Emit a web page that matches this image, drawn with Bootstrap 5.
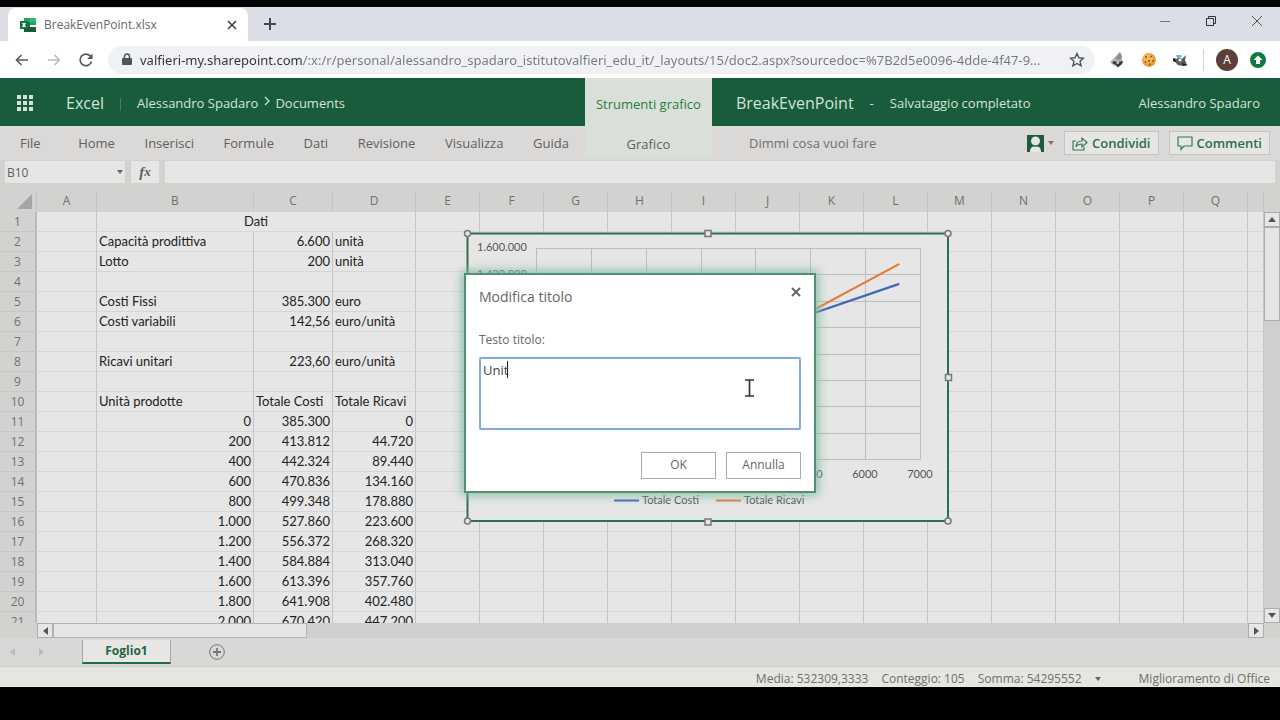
<!DOCTYPE html>
<html lang="it">
<head>
<meta charset="utf-8">
<meta name="viewport" content="width=device-width, initial-scale=1">
<title>BreakEvenPoint.xlsx</title>
<link href="https://cdn.jsdelivr.net/npm/bootstrap@5.3.0/dist/css/bootstrap.min.css" rel="stylesheet">
<style>
  :root { --xl-green: #185c3c; --ui: "Open Sans", "Noto Sans", sans-serif; --cell: Lato, "Open Sans", sans-serif; }
  body { font-family: var(--ui); font-size: 13px; line-height: 20px; background: #000; color: #444; }
  svg { display: block; flex: none; }
  button, input, textarea { font-family: inherit; }
  .bare { background: none; border: 0; padding: 0; color: inherit; display: flex; align-items: center; justify-content: center; }
  .window { height: 100vh; padding: 7px 0 33px; }

  /* browser */
  .tabstrip { height: 34px; background: #dcdee5; padding-left: 8px; }
  .browser-tab { width: 240px; background: #fff; border-radius: 8px 8px 0 0; margin-top: 1px; padding: 0 10px 0 12px; color: #66696d; font-size: 12px; }
  .win-buttons { gap: 34px; padding: 0 17px 6px 0; }
  .toolbar { height: 37px; background: #fff; color: #505357; padding: 0 14px; }
  .omnibox { height: 28px; border-radius: 14px; background: #f0f1f4; padding: 0 10px 0 14px; margin-left: 14px; min-width: 0; }
  .omnibox input { border: 0; padding: 0; outline: 0; font-family: "Noto Sans", sans-serif; font-size: 13px; height: 24px; min-width: 0; text-overflow: ellipsis;
    background: linear-gradient(90deg, #303336 162px, #76797d 162px); -webkit-background-clip: text; background-clip: text; color: transparent; }
  .extensions { gap: 16px; margin-left: 14px; }
  .profile { gap: 12px; margin-left: 14px; }
  .avatar { width: 22px; height: 22px; border-radius: 50%; background: #5c4038; color: #fff; font-size: 12px; }

  /* application */
  .app-area { background: #d2d2cf; }
  .three { display: grid; grid-template-columns: 45.7% 127px 1fr; flex: none; }
  .title-row { height: 48px; background: var(--xl-green); color: #d3e3da; font-size: 13px; }
  .title-row a { color: inherit; text-decoration: none; }
  .brand { font-size: 16px; }
  .tool-tab { background: #d9e0d9; color: #2d7d3a; padding-top: 3px; }
  .ribbon { height: 34px; background: #dad9d7; color: #606060; }
  .ribbon .nav-link { color: inherit; padding: 0; }
  .ribbon .chart-tab { background: #d9e0d9; height: 31px; padding-top: 4px; color: inherit; }
  .ribbon-right { padding: 0 10px 0 37px; }
  .out-btn { height: 24px; background: #e5e5e4; border: 1px solid #c3c3c1; color: #2c6e4f; font-weight: 600; padding: 0 7px; gap: 4px; }
  .out-group { gap: 10px; }
  .tell { background: none; border: 0; color: #666; padding: 0; width: 190px; outline: 0; }
  .tell::placeholder { color: #707070; opacity: 1; }

  .formula-row { height: 30px; padding: 1px 5px 7px; gap: 6px; flex: none; }
  .formula-row input, .fx { background: #e6e6e6; border: 0; color: #606060; outline: 0; }
  .name-box { width: 120px; position: relative; }
  .name-box input { width: 100%; height: 22px; padding: 0 2px; font-size: 12px; }
  .name-box button { position: absolute; right: 2px; top: 9px; }
  .fx { width: 28px; font: italic bold 15px "Liberation Serif", serif; }

  .grid-row { flex: 1 1 0; min-height: 0; }
  .grid-wrap { position: relative; background: #e6e6e6; }
  .sheet { table-layout: fixed; width: 100%; border-collapse: separate; border-spacing: 0; font-family: var(--cell); font-size: 13px; color: #222; }
  .sheet th { background: #d2d2d0; color: #707070; font-weight: 400; font-family: var(--ui); font-size: 12px; text-align: center; padding: 0; }
  .sheet thead th { height: 22px; line-height: 22px; border-right: 1px solid #c6c6c6; }
  .sheet tbody th { height: 20px; line-height: 19px; border-right: 2px solid #bbb; border-bottom: 1px solid #c8c8c6; }
  .sheet td { height: 20px; line-height: 19px; padding: 0 2px; border-right: 1px solid #c4c4c7; border-bottom: 1px solid #d6d6d8; white-space: nowrap; overflow: hidden; }
  .c-head { width: 37px; } .c-a { width: 60px; } .c-b { width: 157px; } .c-c { width: 79px; } .c-d { width: 83px; } .c-n { width: 64px; }
  .chart { position: absolute; left: 463px; top: 38px; }
  .chart text { font-family: var(--cell); font-size: 11px; fill: #555; }

  .v-bar { width: 16px; background: #cfcfcf; margin-top: 22px; }
  .h-bar { height: 15px; background: #cfcfcf; margin: 0 16px 0 37px; }
  .sb { background: #e6e6e6; border: 1px solid #adadad; width: 16px; height: 15px; flex: none; color: #555; padding: 0; display: flex; align-items: center; justify-content: center; }
  .v-thumb { height: 94px; background: #e6e6e8; border: 1px solid #adadb0; }
  .h-thumb { width: 254px; background: #e6e6e6; border: 1px solid #b4b4b4; }
  .sheet-tabs { height: 29px; background: #d9d8d6; padding-left: 10px; border-bottom: 1px solid #cdcdcb; }
  .sheet-tab { width: 89px; height: 24px; background: #e6e6e4; border: solid #a5a5a5; border-width: 0 1px 2px; border-bottom-color: #1f6e46; color: #22653f; font-weight: 700; font-size: 12px; padding: 0; margin-left: 38px; }
  .add-sheet { margin-left: 38px; }
  .status { height: 20px; background: #e5e6e1; color: #707070; font-size: 12px; padding: 3px 10px 0 0; gap: 13px; }
  .status a { color: inherit; text-decoration: none; margin-left: 25px; }

  .overlay { position: absolute; inset: 0; }
  .dialog-box { width: 352px; background: #fff; border: 2px solid #4f9272; box-shadow: 0 0 10px 2px #83bda0; padding: 12px 13px; color: #666; }
  .dialog-box h2 { font-size: 14px; line-height: 20px; font-weight: 400; margin: 0; }
  .dialog-box label { font-size: 12px; margin-top: 23px; margin-bottom: 7px; }
  .title-field { position: relative; }
  .title-field textarea { display: block; width: 100%; height: 73px; resize: none; border: 2px solid #80abe0; border-radius: 2px; outline: 0; padding: 1px 2px; font-size: 13px; line-height: 20px; color: #444; }
  .caret { position: absolute; left: 28px; top: 4px; width: 1px; height: 17px; background: #222; }
  .pointer { position: absolute; left: 265px; top: 22px; }
  .dlg-actions { gap: 10px; margin-top: 22px; }
  .dlg-btn { width: 75px; height: 27px; background: #fff; border: 1px solid #ababab; color: #666; font-size: 12px; padding: 0; }
</style>
</head>
<body>
<div class="window d-flex flex-column">
  <header class="flex-shrink-0">
    <div class="tabstrip d-flex">
      <div class="browser-tab d-flex align-items-center">
        <svg width="16" height="14" viewBox="0 0 16 14"><path fill="#21a366" d="M4 0h12v7H4z"/><path fill="#107c41" d="M4 4h6v6H4z"/><path fill="#2fb878" d="M10 0h6v4h-6z"/><path fill="#185c37" d="M4 9h12v5H4z"/><path fill="#0d7040" d="M0 3h8v8H0z"/><path stroke="#fff" stroke-width="1.3" d="M2.5 5l3 4M5.500 5l-3 4"/></svg>
        <span class="ms-2 flex-grow-1">BreakEvenPoint.xlsx</span>
        <button class="bare" aria-label="Chiudi scheda"><svg width="12" height="12" viewBox="0 0 12 12" stroke="#444" stroke-width="1.700"><path d="M2 2l8 8M10 2l-8 8"/></svg></button>
      </div>
      <button class="bare ms-3" aria-label="Nuova scheda"><svg width="12" height="12" viewBox="0 0 12 12" stroke="#44474b" stroke-width="2"><path d="M6 0v12M0 6h12"/></svg></button>
      <div class="ms-auto d-flex win-buttons">
        <button class="bare" aria-label="Riduci a icona"><svg width="12" height="12" stroke="#777"><path d="M1 6.500h10"/></svg></button>
        <button class="bare" aria-label="Ripristina"><svg width="12" height="12" fill="none" stroke="#333"><path d="M1.500 3.500h7v7h-7zM3.500 3.500v-2h7v7h-2"/></svg></button>
        <button class="bare" aria-label="Chiudi"><svg width="12" height="12" stroke="#555"><path d="M1 1l10 10M11 1L1 11"/></svg></button>
      </div>
    </div>
    <div class="toolbar d-flex align-items-center">
      <button class="bare" aria-label="Indietro"><svg width="16" height="16" viewBox="0 0 16 16" fill="none" stroke="#55585c" stroke-width="1.600"><path d="M14 8H2.500M7.500 3L2.500 8l5 5"/></svg></button>
      <button class="bare ms-3" aria-label="Avanti"><svg width="16" height="16" viewBox="0 0 16 16" fill="none" stroke="#bbb" stroke-width="1.600"><path d="M2 8h11.500M8.500 3l5 5-5 5"/></svg></button>
      <button class="bare ms-3" aria-label="Ricarica"><svg width="16" height="16" viewBox="0 0 16 16" fill="none" stroke="#55585c" stroke-width="1.700"><path d="M13.500 9.500a5.800 5.800 0 1 1-1.200-5.500L14 5.500"/><path fill="#55585c" stroke="none" d="M14.500 1.500v5.500H9z"/></svg></button>
      <div class="omnibox d-flex align-items-center flex-grow-1">
        <svg width="10" height="13" viewBox="0 0 10 13"><path fill="none" stroke="#505357" stroke-width="1.500" d="M2.500 6V3.500a2.500 2.500 0 0 1 5 0V6"/><rect y="5" width="10" height="7" rx="1" fill="#505357"/></svg>
        <input class="flex-grow-1 mx-2" aria-label="Indirizzo" value="valfieri-my.sharepoint.com/:x:/r/personal/alessandro_spadaro_istitutovalfieri_edu_it/_layouts/15/doc2.aspx?sourcedoc=%7B2d5e0096-4dde-4f47-9...">
        <button class="bare" aria-label="Aggiungi ai preferiti"><svg width="16" height="16" viewBox="0 0 16 16" fill="none" stroke="#505357" stroke-width="1.400"><path d="M8 1.500l1.900 4.300 4.600.4-3.500 3.100 1.100 4.600L8 11.500l-4.100 2.400L5 9.300 1.500 6.200l4.600-.4z"/></svg></button>
      </div>
      <div class="d-flex align-items-center extensions">
        <svg width="16" height="18" viewBox="0 0 16 18"><path fill="#b4b7ba" d="M11 1c1.500 3 2.500 5 2 8l1 2-5 5-5-2-3-3 2-2 4-4z"/><path fill="#8b8f92" d="M11 1L6 8l5 1 2-3z"/><path fill="#3a3a3a" d="M5 10l4 1 5-1-1 3-4 3.500L7 14l-4-2z"/><path fill="#e4e4e4" d="M7 11.500l3-.5v1.500l-2 .5z"/></svg>
        <svg width="16" height="16" viewBox="0 0 16 16"><circle cx="8" cy="8" r="7" fill="#e9a23b"/><circle cx="7" cy="6.500" r="5" fill="#f3b854"/><g fill="#8a5420"><circle cx="5" cy="5" r="1"/><circle cx="10" cy="4.500" r=".9"/><circle cx="8" cy="9" r="1.100"/><circle cx="12" cy="9" r=".9"/><circle cx="4.500" cy="10" r=".9"/><circle cx="9" cy="12.500" r=".9"/></g></svg>
        <svg width="16" height="16" viewBox="0 0 16 16"><path fill="#5a5a5a" d="M1 6l3 1 1-2 4 2 4-4-1 5 2 5-4 1-5-1-4-4z"/><path fill="#68b9d6" d="M3 3h5l1 2-5 1z"/><path fill="#222" d="M0 6l3 2-1 2-2-1zM9 11l6 2-5 1z"/><circle cx="7" cy="8" r="1.600" fill="#eee"/></svg>
      </div>
      <div class="d-flex align-items-center profile">
        <span class="vr"></span>
        <button class="bare avatar" aria-label="Profilo">A</button>
        <button class="bare" aria-label="Aggiorna"><svg width="16" height="16" viewBox="0 0 16 16"><circle cx="8" cy="8" r="8" fill="#0c7c3f"/><path fill="#fff" d="M8 3.500l4.500 4.500H10v4H6V8H3.500z"/></svg></button>
      </div>
    </div>
  </header>

  <main class="app-area position-relative flex-grow-1 d-flex flex-column overflow-hidden">
    <div class="title-row three">
      <div class="d-flex align-items-center ps-3 pt-1">
        <button class="bare pb-1" aria-label="Avvio app"><svg width="18" height="18" viewBox="0 0 18 18" fill="#d3e3da"><path d="M1 1h4v4H1zM7 1h4v4H7zM13 1h4v4h-4zM1 7h4v4H1zM7 7h4v4H7zM13 7h4v4h-4zM1 13h4v4H1zM7 13h4v4H7zM13 13h4v4h-4z"/></svg></button>
        <a href="#" class="brand ms-4 ps-2 pb-1">Excel</a>
        <span class="vr mx-3 my-3"></span>
        <a href="#" class="pb-1">Alessandro Spadaro</a>
        <svg class="mx-1 mb-2" width="9" height="10" viewBox="0 0 9 10" fill="none" stroke="#cfe0d6" stroke-width="1.300"><path d="M3 1l4 4-4 4"/></svg>
        <a href="#" class="pb-1">Documents</a>
      </div>
      <div class="tool-tab d-flex align-items-center justify-content-center">Strumenti grafico</div>
      <div class="d-flex align-items-center ps-4 pe-3">
        <span class="brand">BreakEvenPoint</span><span class="mx-3">-</span><span>Salvataggio completato</span>
        <a href="#" class="ms-auto me-1">Alessandro Spadaro</a>
      </div>
    </div>
    <div class="ribbon three">
      <nav class="nav align-items-center justify-content-between flex-nowrap px-3">
        <a class="nav-link ms-1 me-2" href="#">File</a><a class="nav-link" href="#">Home</a><a class="nav-link" href="#">Inserisci</a><a class="nav-link" href="#">Formule</a><a class="nav-link" href="#">Dati</a><a class="nav-link" href="#">Revisione</a><a class="nav-link" href="#">Visualizza</a><a class="nav-link" href="#">Guida</a>
      </nav>
      <a class="chart-tab d-flex align-items-center justify-content-center text-decoration-none" href="#">Grafico</a>
      <div class="d-flex align-items-center out-group ribbon-right">
        <input class="tell" aria-label="Dimmi cosa vuoi fare" placeholder="Dimmi cosa vuoi fare">
        <button class="bare ms-auto gap-1" aria-label="Utenti"><svg width="17" height="17" viewBox="0 0 17 17"><path fill="#1d5a3e" d="M0 0h17v17H0z"/><circle cx="8.500" cy="6" r="4.500" fill="#e4e6e4"/><path fill="#e4e6e4" d="M3 17c0-4 2-6 5.500-6s5.500 2 5.500 6z"/><path stroke="#1d5a3e" stroke-width="1.200" d="M5 10q3.500 2.500 7 0" fill="none"/></svg><svg width="6" height="4"><path d="M0 0h6L3 4z" fill="#777"/></svg></button>
        <button class="out-btn d-flex align-items-center"><svg width="16" height="15" viewBox="0 0 16 15" fill="none" stroke="#39775a" stroke-width="1.200"><path d="M4 5H1v9h11v-3M4 11c0-4 2-6 6-6V2l5 4.500L10 11V8c-3 0-5 1-6 3z"/></svg>Condividi</button>
        <button class="out-btn d-flex align-items-center"><svg width="16" height="15" viewBox="0 0 16 15" fill="none" stroke="#39775a" stroke-width="1.200"><path d="M1 1h14v9H7l-3 3.500V10H1z"/></svg>Commenti</button>
      </div>
    </div>
    <div class="formula-row d-flex">
      <div class="name-box"><input aria-label="Casella nome" value="B10"><button class="bare" aria-label="Apri elenco nomi"><svg width="6" height="4"><path d="M0 0h6L3 4z" fill="#666"/></svg></button></div>
      <button class="fx bare" aria-label="Inserisci funzione">f<small>x</small></button>
      <input class="flex-grow-1" aria-label="Barra della formula">
    </div>

    <div class="d-flex grid-row">
      <div class="grid-wrap flex-grow-1 overflow-hidden">
        <table class="sheet">
          <colgroup id="cols"></colgroup>
          <thead><tr id="letters"></tr></thead>
          <tbody id="rows"></tbody>
        </table>
        <svg class="chart" width="490" height="300" viewBox="463 228 490 300">
          <rect x="467.500" y="233.500" width="480.500" height="287.500" fill="#e6e6e6" stroke="#316f51" stroke-width="2"/>
          <path id="plot-lines" fill="none" stroke="#bdbdbd"/>
          <path d="M536 408.200L898.500 284.100" stroke="#4168b8" stroke-width="2.200" stroke-linecap="round"/>
          <path d="M536 459L898.500 264.400" stroke="#e07b39" stroke-width="2.200" stroke-linecap="round"/>
          <text x="477" y="251">1.600.000</text><text x="477" y="278">1.400.000</text>
          <text x="810" y="478" text-anchor="middle">5000</text><text x="865" y="478" text-anchor="middle">6000</text><text x="920" y="478" text-anchor="middle">7000</text>
          <path d="M614 500.500h25" stroke="#4168b8" stroke-width="2"/><text x="642" y="504">Totale Costi</text>
          <path d="M716 500.500h25" stroke="#e07b39" stroke-width="2"/><text x="744" y="504">Totale Ricavi</text>
          <g fill="#e6e6e6" stroke="#777" stroke-width="1.500"><circle cx="467.500" cy="233.500" r="3"/><circle cx="948" cy="233.500" r="3"/><circle cx="467.500" cy="521" r="3"/><circle cx="948" cy="521" r="3"/><path d="M705 230.500h6v6h-6zM705 519h6v6h-6zM945.500 374.500h6v6h-6z"/></g>
        </svg>
      </div>
      <div class="v-bar d-flex flex-column flex-shrink-0">
        <button class="sb" aria-label="Scorri su"><svg width="8" height="5"><path d="M0 5h8L4 0z" fill="#555"/></svg></button>
        <div class="v-thumb"></div>
        <button class="sb mt-auto" aria-label="Scorri giù"><svg width="8" height="5"><path d="M0 0h8L4 5z" fill="#555"/></svg></button>
      </div>
    </div>
    <div class="h-bar d-flex flex-shrink-0">
      <button class="sb" aria-label="Scorri a sinistra"><svg width="5" height="8"><path d="M5 0v8L0 4z" fill="#555"/></svg></button>
      <div class="h-thumb"></div>
      <button class="sb ms-auto" aria-label="Scorri a destra"><svg width="5" height="8"><path d="M0 0v8l5-4z" fill="#555"/></svg></button>
    </div>
    <div class="sheet-tabs d-flex align-items-center flex-shrink-0">
      <button class="bare" aria-label="Foglio precedente"><svg width="5" height="8"><path d="M5 0v8L0 4z" fill="#bbb"/></svg></button>
      <button class="bare ms-4" aria-label="Foglio successivo"><svg width="5" height="8"><path d="M0 0v8l5-4z" fill="#bbb"/></svg></button>
      <button class="sheet-tab">Foglio1</button>
      <button class="bare add-sheet" aria-label="Nuovo foglio"><svg width="16" height="16" viewBox="0 0 16 16" fill="none" stroke="#777"><circle cx="8" cy="8" r="7.300"/><path stroke-width="1.800" d="M8 4v8M4 8h8"/></svg></button>
    </div>
    <footer class="status d-flex align-items-center flex-shrink-0 justify-content-end">
      <span>Media: 532309,3333</span><span>Conteggio: 105</span><span>Somma: 54295552</span>
      <button class="bare" aria-label="Opzioni barra di stato"><svg width="6" height="4"><path d="M0 0h6L3 4z" fill="#666"/></svg></button>
      <a href="#">Miglioramento di Office</a>
    </footer>

    <div class="overlay d-flex align-items-center justify-content-center">
      <form class="dialog-box" role="dialog" aria-labelledby="dlg-title">
        <div class="d-flex justify-content-between align-items-start">
          <h2 id="dlg-title">Modifica titolo</h2>
          <button type="button" class="bare" aria-label="Chiudi"><svg width="10" height="10" stroke="#666" stroke-width="2"><path d="M1 1l8 8M9 1L1 9"/></svg></button>
        </div>
        <label for="title-text" class="d-block">Testo titolo:</label>
        <div class="title-field">
          <textarea id="title-text">Unit</textarea>
          <span class="caret"></span>
          <svg class="pointer" width="11" height="18" viewBox="0 0 11 18" fill="none" stroke="#333" stroke-width="1.700"><path d="M1 1h9M1 17h9M5.500 1v16"/></svg>
        </div>
        <div class="d-flex justify-content-end dlg-actions">
          <button type="button" class="dlg-btn">OK</button><button type="button" class="dlg-btn">Annulla</button>
        </div>
      </form>
    </div>
  </main>
</div>
<script src="https://cdn.jsdelivr.net/npm/bootstrap@5.3.0/dist/js/bootstrap.bundle.min.js"></script>
<script>
  const letters = 'ABCDEFGHIJKLMNOPQ'.split('');
  const widthClass = l => ({ A: 'c-a', B: 'c-b', C: 'c-c', D: 'c-d' }[l] || 'c-n');
  document.getElementById('cols').innerHTML = '<col class="c-head">' + letters.map(l => `<col class="${widthClass(l)}">`).join('') + '<col>';
  document.getElementById('letters').innerHTML =
    '<th><svg class="ms-auto me-1" width="15" height="15"><path d="M15 0v15H0z" fill="#a5a5a3"/></svg></th>' +
    letters.map(l => `<th scope="col">${l}</th>`).join('') + '<th></th>';

  const group = n => String(n).replace(/\B(?=(\d{3})+$)/g, '.');
  const data = {
    2: ['Capacità prodittiva', '6.600', 'unità'], 3: ['Lotto', '200', 'unità'],
    5: ['Costi Fissi', '385.300', 'euro'], 6: ['Costi variabili', '142,56', 'euro/unità'],
    8: ['Ricavi unitari', '223,60', 'euro/unità'], 10: ['Unità prodotte', 'Totale Costi', 'Totale Ricavi']
  };
  for (let r = 11; r <= 21; r++) {
    const q = (r - 11) * 200;
    data[r] = [group(q), group(Math.round(385300 + 142.56 * q)), group(Math.round(223.6 * q))];
  }
  const numeric = v => /^[\d.,]+$/.test(v);
  let html = '';
  for (let r = 1; r <= 21; r++) {
    const cells = data[r] || ['', '', ''];
    html += `<tr><th scope="row">${r}</th><td></td>` +
      (r === 1 ? '<td colspan="3" class="text-center">Dati</td>'
               : cells.map(v => `<td${numeric(v) ? ' class="text-end"' : ''}>${v}</td>`).join('')) +
      '<td></td>'.repeat(14) + '</tr>';
  }
  document.getElementById('rows').innerHTML = html;

  let lines = '';
  for (let i = 0; i <= 7; i++) lines += `M${Math.round(536 + i * 384 / 7) + 0.5} 248V459.5`;
  for (let i = 0; i <= 8; i++) lines += `M536 ${Math.round(248 + i * 211 / 8) + 0.5}H920.5`;
  document.getElementById('plot-lines').setAttribute('d', lines);
</script>
</body>
</html>
